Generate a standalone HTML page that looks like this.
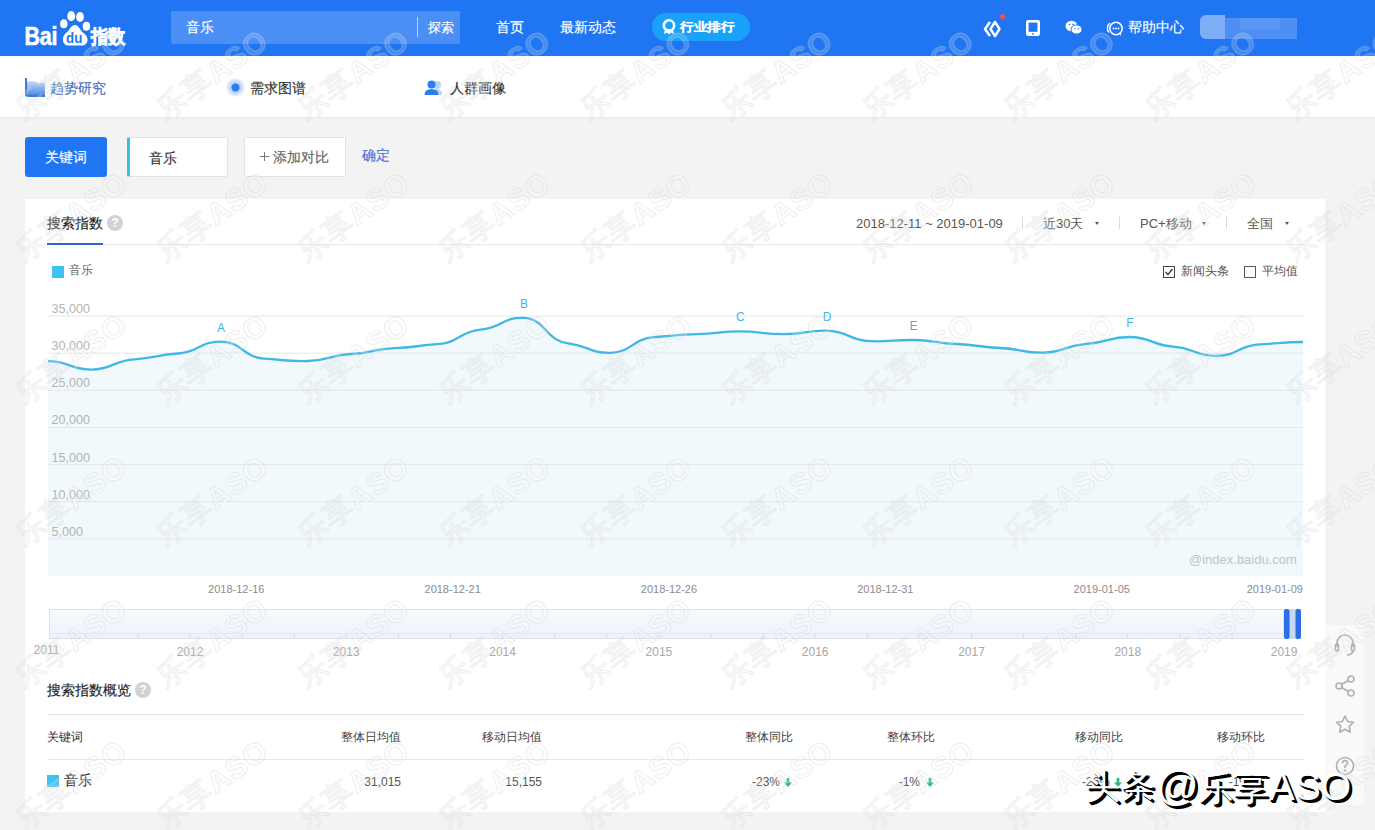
<!DOCTYPE html>
<html><head><meta charset="utf-8">
<style>
*{margin:0;padding:0;box-sizing:border-box}
html,body{width:1375px;height:830px;overflow:hidden}
body{position:relative;background:#f3f3f3;font-family:"Liberation Sans",sans-serif;color:#333;font-size:14px}
.t14{-webkit-text-stroke:0.15px currentColor}
.a{position:absolute;white-space:nowrap}
#hdr{position:absolute;left:0;top:0;width:1375px;height:56px;background:#1f75f2}
#nav2{position:absolute;left:0;top:56px;width:1375px;height:61px;background:#fff;box-shadow:0 1px 3px rgba(0,0,0,0.04)}
.t14{font-size:14px;line-height:14px}
.t12{font-size:12px;line-height:12px}
.t13{font-size:13px;line-height:13px}
#card{position:absolute;left:25px;top:199px;width:1300px;height:613px;background:#fff}
.yl{position:absolute;left:51.5px;font-size:12.6px;line-height:12px;color:#b4b4b4;width:60px}
.mk{position:absolute;width:20px;text-align:center;font-size:12px;line-height:14px;color:#3cb6e3}
.xl{position:absolute;top:583px;width:100px;text-align:right;font-size:11px;line-height:12px;color:#8c8c8c}
.yr{position:absolute;width:60px;text-align:center;font-size:12px;line-height:12px;color:#a8a8a8}
.th{position:absolute;top:731px;font-size:12px;line-height:12px;color:#444;text-align:right}
.td{position:absolute;top:776px;font-size:12px;line-height:12px;color:#555;text-align:right}
</style></head><body>
<div id="hdr"></div>
<!-- logo -->
<svg class="a" style="left:0;top:0" width="140" height="56" viewBox="0 0 140 56">
  <g fill="#fff">
    <text x="24.5" y="45" font-family="Liberation Sans" font-weight="bold" font-size="25" stroke="#fff" stroke-width="0.6" transform="translate(24.5 0) scale(0.86 1) translate(-24.5 0)" letter-spacing="-0.3">Bai</text>
    <ellipse cx="71.2" cy="16.2" rx="3.9" ry="5.1"/>
    <ellipse cx="80" cy="17" rx="3.9" ry="5.1"/>
    <ellipse cx="63.8" cy="23.8" rx="3.7" ry="4.5"/>
    <ellipse cx="86.4" cy="26.2" rx="3.7" ry="4.5"/>
    <path d="M75 25 C72 25 70.5 28 68.5 30.5 C66.5 33 63 34.5 63 39.5 C63 43.5 65.5 45.5 69 45.5 L81.5 45.5 C85 45.5 87.5 43.5 87.5 40 C87.5 35 83.5 33.5 81.5 31 C79.5 28.5 78 25 75 25 Z"/>
  </g>
  <text x="66" y="42.8" fill="#1f75f2" font-family="Liberation Sans" font-weight="bold" font-size="14.5" transform="translate(66 0) scale(0.92 1) translate(-66 0)">du</text>
</svg>
<div class="a" style="left:91px;top:24px;font-size:18px;line-height:24px;font-weight:900;color:#fff;transform:scale(0.95,1.05);transform-origin:0 0;letter-spacing:-0.5px;-webkit-text-stroke:0.7px #fff">指数</div>
<!-- search -->
<div class="a" style="left:171px;top:10.5px;width:289px;height:33px;background:#4b8ef4;border-radius:2px"></div>
<div class="a t14" style="left:186px;top:20px;color:#fff">音乐</div>
<div class="a" style="left:417px;top:17px;width:1px;height:20px;background:rgba(255,255,255,0.6)"></div>
<div class="a t14" style="left:427.5px;top:22px;color:#fff;font-size:12.5px;line-height:12.5px">探索</div>
<div class="a t14" style="left:496px;top:20px;color:#fff">首页</div>
<div class="a t14" style="left:560px;top:20px;color:#fff">最新动态</div>
<div class="a" style="left:652px;top:13px;width:98px;height:28px;border-radius:14px;background:#1aa1fa"></div>
<svg class="a" style="left:662px;top:19px" width="15" height="16" viewBox="0 0 15 16"><circle cx="7" cy="6.5" r="5.2" fill="none" stroke="#fff" stroke-width="2.6"/><path d="M3 10 L2 15 L5 13.5 L7 15.5 L9 13.5 L12 15 L11 10" fill="#fff"/></svg>
<div class="a t14" style="left:680px;top:20px;color:#fff;font-weight:bold;transform:scale(0.98,0.86);transform-origin:0 50%">行业排行</div>
<!-- right icons -->
<svg class="a" style="left:983px;top:20px" width="20" height="18" viewBox="0 0 20 18"><path d="M7 2 L2 9 L7 16" fill="none" stroke="#fff" stroke-width="2.6" stroke-linejoin="round"/><path d="M12 2 L7.5 9 L12 16 L16.5 9 Z" fill="none" stroke="#fff" stroke-width="2.4" stroke-linejoin="round"/></svg>
<div class="a" style="left:1000px;top:14px;width:5px;height:5px;border-radius:3px;background:#f4524d"></div>
<svg class="a" style="left:1026px;top:20px" width="14" height="16" viewBox="0 0 14 16"><rect x="0" y="0" width="14" height="16" rx="2.2" fill="#fff"/><rect x="2.6" y="2.6" width="8.8" height="9.2" fill="#1f75f2"/><circle cx="7" cy="13.9" r="0.9" fill="#1f75f2"/></svg>
<svg class="a" style="left:1065px;top:20px" width="18" height="15" viewBox="0 0 18 15"><ellipse cx="6.5" cy="6" rx="6" ry="5.2" fill="#fff"/><ellipse cx="11.5" cy="9.5" rx="5.5" ry="4.6" fill="#fff" stroke="#1f75f2" stroke-width="1"/><circle cx="4.5" cy="4.5" r="0.8" fill="#1f75f2"/><circle cx="8" cy="4.5" r="0.8" fill="#1f75f2"/><circle cx="10" cy="8.8" r="0.7" fill="#1f75f2"/><circle cx="13.2" cy="8.8" r="0.7" fill="#1f75f2"/></svg>
<svg class="a" style="left:1106px;top:20px" width="18" height="17" viewBox="0 0 18 17"><path d="M4 3 C1 5 0.5 10 3 12.5" fill="none" stroke="#fff" stroke-width="1.3"/><circle cx="10" cy="8.5" r="6.2" fill="none" stroke="#fff" stroke-width="1.5"/><path d="M13 14 L15.5 16 L14.5 12.5" fill="#fff"/><circle cx="7.5" cy="8.5" r="0.9" fill="#fff"/><circle cx="10" cy="8.5" r="0.9" fill="#fff"/><circle cx="12.5" cy="8.5" r="0.9" fill="#fff"/></svg>
<div class="a t14" style="left:1128px;top:20px;color:#fff">帮助中心</div>
<div class="a" style="left:1200px;top:15px;width:25px;height:24px;border-radius:6px 0 0 6px;background:#7eaef5"></div>
<div class="a" style="left:1225px;top:18px;width:72px;height:21px;background:#4f8ff4"></div>
<div class="a" style="left:1240px;top:18px;width:40px;height:12px;background:#5a97f5"></div>

<!-- nav2 -->
<div id="nav2"></div>
<svg class="a" style="left:25px;top:78px" width="20" height="19" viewBox="0 0 20 19"><defs><linearGradient id="g1" x1="0" y1="0" x2="0" y2="1"><stop offset="0" stop-color="#c9dcf6"/><stop offset="1" stop-color="#4f8be6"/></linearGradient></defs><path d="M0 0 L2 0 L2 16 Q2 17 3 17 L20 17 L20 19 L3 19 Q0 19 0 16 Z" fill="#3d78d8"/><path d="M2 4 Q7 2 11 4 Q15 6 20 4 L20 17 L3 17 Q2 17 2 16 Z" fill="url(#g1)"/></svg>
<div class="a t14" style="left:50px;top:81px;color:#3f6ec0">趋势研究</div>
<div class="a" style="left:225.5px;top:78px;width:19px;height:19px;border-radius:50%;background:radial-gradient(circle,#2f7cf2 0,#2f7cf2 3.6px,#b4cffb 4.4px,#c9dcfc 6px,#e3ecfe 8px,rgba(240,245,255,0.6) 9.5px)"></div>
<div class="a t14" style="left:250px;top:81px;color:#333">需求图谱</div>
<svg class="a" style="left:424px;top:80px" width="20" height="16" viewBox="0 0 20 16"><circle cx="13" cy="5" r="4" fill="#b8d3fa"/><path d="M9 15 Q9 9 13 9 Q18 9 18 15 Z" fill="#b8d3fa"/><circle cx="7.5" cy="4.5" r="4" fill="#2b7ef0"/><path d="M0.5 15 Q0.5 9 7.5 9 Q14.5 9 14.5 15 Z" fill="#2b7ef0"/></svg>
<div class="a t14" style="left:450px;top:81px;color:#333">人群画像</div>

<!-- keyword row -->
<div class="a" style="left:25px;top:137px;width:82px;height:40px;background:#1f75f2;border-radius:3px"></div>
<div class="a t14" style="left:45px;top:150px;color:#fff">关键词</div>
<div class="a" style="left:127px;top:137px;width:101px;height:40px;background:#fff;border:1px solid #e3e3e3;border-left:3px solid #3cbce8;border-radius:2px"></div>
<div class="a t14" style="left:149px;top:151px;color:#333">音乐</div>
<div class="a" style="left:244px;top:137px;width:102px;height:40px;background:#fff;border:1px solid #e3e3e3;border-radius:2px"></div>
<div class="a" style="left:260px;top:156px;width:9px;height:1px;background:#777"></div><div class="a" style="left:264px;top:152px;width:1px;height:9px;background:#777"></div><div class="a t14" style="left:273px;top:150px;color:#666">添加对比</div>
<div class="a t14" style="left:362px;top:148px;color:#4b73d6">确定</div>

<!-- card -->
<div id="card"></div>
<div class="a t14" style="left:47px;top:216px;color:#222">搜索指数</div>
<div class="a" style="left:107px;top:215px;width:16px;height:16px;border-radius:50%;background:#d2d2d2;color:#fff;font-size:12px;line-height:16px;text-align:center;font-weight:bold">?</div>
<div class="a" style="left:47px;top:244px;width:1257px;height:1px;background:#e8e8e8"></div>
<div class="a" style="left:47px;top:243px;width:56px;height:2px;background:#2f64c8"></div>
<div class="a t13" style="left:856px;top:217px;color:#555">2018-12-11 ~ 2019-01-09</div>
<div class="a" style="left:1022px;top:216px;width:1px;height:13px;background:#dcdcdc"></div>
<div class="a t13" style="left:1043px;top:217px;color:#555">近30天</div>
<div class="a" style="left:1094.5px;top:222px;width:0;height:0;border-left:2.5px solid transparent;border-right:2.5px solid transparent;border-top:3px solid #555"></div>
<div class="a" style="left:1119px;top:216px;width:1px;height:13px;background:#dcdcdc"></div>
<div class="a t13" style="left:1140px;top:217px;color:#555">PC+移动</div>
<div class="a" style="left:1201.5px;top:222px;width:0;height:0;border-left:2.5px solid transparent;border-right:2.5px solid transparent;border-top:3px solid #555"></div>
<div class="a" style="left:1226px;top:216px;width:1px;height:13px;background:#dcdcdc"></div>
<div class="a t13" style="left:1247px;top:217px;color:#555">全国</div>
<div class="a" style="left:1284.5px;top:222px;width:0;height:0;border-left:2.5px solid transparent;border-right:2.5px solid transparent;border-top:3px solid #555"></div>

<div class="a" style="left:52px;top:266px;width:12px;height:12px;background:#3ec1f3"></div>
<div class="a t12" style="left:69px;top:264px;color:#666">音乐</div>
<svg class="a" style="left:1163px;top:266px" width="12" height="12" viewBox="0 0 12 12"><rect x="0.5" y="0.5" width="11" height="11" fill="#fff" stroke="#444"/><path d="M2.5 6 L5 8.5 L9.5 3" fill="none" stroke="#333" stroke-width="1.3"/></svg>
<div class="a t12" style="left:1181px;top:265px;color:#555">新闻头条</div>
<svg class="a" style="left:1244px;top:266px" width="12" height="12" viewBox="0 0 12 12"><rect x="0.5" y="0.5" width="11" height="11" fill="#fff" stroke="#555"/></svg>
<div class="a t12" style="left:1262px;top:265px;color:#555">平均值</div>

<!-- chart -->
<svg class="a" style="left:0;top:0" width="1375" height="830">
  <rect x="48" y="316" width="1255" height="260" fill="#fff"/>
  <path d="M48.00 361.20 C69.64 361.20 69.64 369.74 91.28 369.60 C112.91 369.46 112.91 360.51 134.55 359.30 C156.19 358.09 156.19 354.83 177.83 353.50 C199.47 352.17 199.47 341.21 221.10 341.60 C242.74 341.99 242.74 357.25 264.38 358.70 C286.02 360.15 286.02 361.35 307.66 361.00 C329.29 360.65 329.29 354.96 350.93 354.00 C372.57 353.04 372.57 348.94 394.21 348.20 C415.84 347.46 415.84 345.59 437.48 344.20 C459.12 342.81 459.12 331.57 480.76 329.60 C502.40 327.63 502.40 316.89 524.03 317.90 C545.67 318.91 545.67 340.48 567.31 343.10 C588.95 345.72 588.95 353.24 610.59 352.80 C632.22 352.36 632.22 338.59 653.86 337.20 C675.50 335.81 675.50 334.63 697.14 334.20 C718.78 333.76 718.78 331.40 740.41 331.40 C762.05 331.40 762.05 334.25 783.69 334.20 C805.33 334.15 805.33 330.18 826.97 330.70 C848.60 331.22 848.60 340.50 870.24 341.20 C891.88 341.90 891.88 339.79 913.52 340.00 C935.16 340.21 935.16 343.40 956.79 344.00 C978.43 344.60 978.43 347.35 1000.07 348.00 C1021.71 348.65 1021.71 353.01 1043.34 352.70 C1064.98 352.39 1064.98 345.08 1086.62 343.90 C1108.26 342.72 1108.26 336.79 1129.90 337.00 C1151.53 337.21 1151.53 345.29 1173.17 346.70 C1194.81 348.11 1194.81 355.97 1216.45 355.80 C1238.09 355.63 1238.09 345.44 1259.72 344.40 C1281.36 343.36 1281.36 342.00 1303.00 342.00 L1303 576 L48 576 Z" fill="#f1f9fd"/>
  <line x1="48" y1="538.9" x2="1303" y2="538.9" stroke="#e6e6e6" stroke-width="1"/><line x1="48" y1="501.7" x2="1303" y2="501.7" stroke="#e6e6e6" stroke-width="1"/><line x1="48" y1="464.6" x2="1303" y2="464.6" stroke="#e6e6e6" stroke-width="1"/><line x1="48" y1="427.4" x2="1303" y2="427.4" stroke="#e6e6e6" stroke-width="1"/><line x1="48" y1="390.3" x2="1303" y2="390.3" stroke="#e6e6e6" stroke-width="1"/><line x1="48" y1="353.2" x2="1303" y2="353.2" stroke="#e6e6e6" stroke-width="1"/><line x1="48" y1="316.0" x2="1303" y2="316.0" stroke="#e6e6e6" stroke-width="1"/>
  <path d="M48.00 361.20 C69.64 361.20 69.64 369.74 91.28 369.60 C112.91 369.46 112.91 360.51 134.55 359.30 C156.19 358.09 156.19 354.83 177.83 353.50 C199.47 352.17 199.47 341.21 221.10 341.60 C242.74 341.99 242.74 357.25 264.38 358.70 C286.02 360.15 286.02 361.35 307.66 361.00 C329.29 360.65 329.29 354.96 350.93 354.00 C372.57 353.04 372.57 348.94 394.21 348.20 C415.84 347.46 415.84 345.59 437.48 344.20 C459.12 342.81 459.12 331.57 480.76 329.60 C502.40 327.63 502.40 316.89 524.03 317.90 C545.67 318.91 545.67 340.48 567.31 343.10 C588.95 345.72 588.95 353.24 610.59 352.80 C632.22 352.36 632.22 338.59 653.86 337.20 C675.50 335.81 675.50 334.63 697.14 334.20 C718.78 333.76 718.78 331.40 740.41 331.40 C762.05 331.40 762.05 334.25 783.69 334.20 C805.33 334.15 805.33 330.18 826.97 330.70 C848.60 331.22 848.60 340.50 870.24 341.20 C891.88 341.90 891.88 339.79 913.52 340.00 C935.16 340.21 935.16 343.40 956.79 344.00 C978.43 344.60 978.43 347.35 1000.07 348.00 C1021.71 348.65 1021.71 353.01 1043.34 352.70 C1064.98 352.39 1064.98 345.08 1086.62 343.90 C1108.26 342.72 1108.26 336.79 1129.90 337.00 C1151.53 337.21 1151.53 345.29 1173.17 346.70 C1194.81 348.11 1194.81 355.97 1216.45 355.80 C1238.09 355.63 1238.09 345.44 1259.72 344.40 C1281.36 343.36 1281.36 342.00 1303.00 342.00" fill="none" stroke="#3fb8e5" stroke-width="2.3"/>
  <defs><linearGradient id="sg" x1="0" y1="0" x2="0" y2="1"><stop offset="0" stop-color="#f6f9fe"/><stop offset="1" stop-color="#eef3f9"/></linearGradient></defs>
  <rect x="49.5" y="609.5" width="1234" height="29" fill="url(#sg)" stroke="#dbe2ec"/>
  <line x1="50" y1="633.5" x2="1283" y2="633.5" stroke="#e3e8ef"/>
  <line x1="85.8" y1="633" x2="85.8" y2="638" stroke="#d6dde8"/><line x1="137.9" y1="633" x2="137.9" y2="638" stroke="#d6dde8"/><line x1="190.0" y1="633" x2="190.0" y2="638" stroke="#d6dde8"/><line x1="242.1" y1="633" x2="242.1" y2="638" stroke="#d6dde8"/><line x1="294.2" y1="633" x2="294.2" y2="638" stroke="#d6dde8"/><line x1="346.3" y1="633" x2="346.3" y2="638" stroke="#d6dde8"/><line x1="398.4" y1="633" x2="398.4" y2="638" stroke="#d6dde8"/><line x1="450.5" y1="633" x2="450.5" y2="638" stroke="#d6dde8"/><line x1="502.6" y1="633" x2="502.6" y2="638" stroke="#d6dde8"/><line x1="554.7" y1="633" x2="554.7" y2="638" stroke="#d6dde8"/><line x1="606.8" y1="633" x2="606.8" y2="638" stroke="#d6dde8"/><line x1="658.9" y1="633" x2="658.9" y2="638" stroke="#d6dde8"/><line x1="711.0" y1="633" x2="711.0" y2="638" stroke="#d6dde8"/><line x1="763.1" y1="633" x2="763.1" y2="638" stroke="#d6dde8"/><line x1="815.2" y1="633" x2="815.2" y2="638" stroke="#d6dde8"/><line x1="867.3" y1="633" x2="867.3" y2="638" stroke="#d6dde8"/><line x1="919.4" y1="633" x2="919.4" y2="638" stroke="#d6dde8"/><line x1="971.5" y1="633" x2="971.5" y2="638" stroke="#d6dde8"/><line x1="1023.6" y1="633" x2="1023.6" y2="638" stroke="#d6dde8"/><line x1="1075.7" y1="633" x2="1075.7" y2="638" stroke="#d6dde8"/><line x1="1127.8" y1="633" x2="1127.8" y2="638" stroke="#d6dde8"/><line x1="1179.9" y1="633" x2="1179.9" y2="638" stroke="#d6dde8"/><line x1="1232.0" y1="633" x2="1232.0" y2="638" stroke="#d6dde8"/>
  <rect x="1289" y="609" width="7" height="30" fill="#c6d8f2"/>
  <rect x="1284" y="609" width="5.5" height="30" rx="2" fill="#2a6fe6"/>
  <rect x="1295.5" y="609" width="5.5" height="30" rx="2" fill="#2a6fe6"/>
</svg>
<div class="yl" style="top:525.9px">5,000</div><div class="yl" style="top:488.7px">10,000</div><div class="yl" style="top:451.6px">15,000</div><div class="yl" style="top:414.4px">20,000</div><div class="yl" style="top:377.3px">25,000</div><div class="yl" style="top:340.2px">30,000</div><div class="yl" style="top:303.0px">35,000</div>
<div class="mk" style="left:211.1px;top:320.6px">A</div><div class="mk" style="left:514.0px;top:296.9px">B</div><div class="mk" style="left:730.4px;top:310.4px">C</div><div class="mk" style="left:817.0px;top:309.7px">D</div><div class="mk" style="left:903.5px;top:319.0px">E</div><div class="mk" style="left:1119.9px;top:316.0px">F</div>
<div class="xl" style="left:164.4px">2018-12-16</div><div class="xl" style="left:380.8px">2018-12-21</div><div class="xl" style="left:597.1px">2018-12-26</div><div class="xl" style="left:813.5px">2018-12-31</div><div class="xl" style="left:1029.9px">2019-01-05</div><div class="xl" style="left:1203.0px">2019-01-09</div>
<div class="a" style="left:1189px;top:553px;font-size:13px;line-height:13px;color:#c3c3c3">@index.baidu.com</div>
<div class="yr" style="left:16.5px;top:644px">2011</div><div class="yr" style="left:160.0px;top:646px">2012</div><div class="yr" style="left:316.3px;top:646px">2013</div><div class="yr" style="left:472.6px;top:646px">2014</div><div class="yr" style="left:628.9px;top:646px">2015</div><div class="yr" style="left:785.2px;top:646px">2016</div><div class="yr" style="left:941.5px;top:646px">2017</div><div class="yr" style="left:1097.8px;top:646px">2018</div><div class="yr" style="left:1254.1px;top:646px">2019</div>

<!-- overview -->
<div class="a t14" style="left:47px;top:683px;color:#222">搜索指数概览</div>
<div class="a" style="left:135px;top:682px;width:16px;height:16px;border-radius:50%;background:#d2d2d2;color:#fff;font-size:12px;line-height:16px;text-align:center;font-weight:bold">?</div>
<div class="a" style="left:47px;top:714px;width:1257px;height:1px;background:#e3e3e3"></div>
<div class="a t12" style="left:47px;top:731px;color:#333">关键词</div>
<div class="th" style="left:301px;width:100px">整体日均值</div>
<div class="th" style="left:442px;width:100px">移动日均值</div>
<div class="th" style="left:693px;width:100px">整体同比</div>
<div class="th" style="left:835px;width:100px">整体环比</div>
<div class="th" style="left:1023px;width:100px">移动同比</div>
<div class="th" style="left:1165px;width:100px">移动环比</div>
<div class="a" style="left:47px;top:759px;width:1257px;height:1px;background:#e8e8e8"></div>
<div class="a" style="left:47px;top:775px;width:12px;height:12px;background:#3ec1f3"></div>
<div class="a t14" style="left:64px;top:773px;color:#333">音乐</div>
<div class="td" style="left:301px;width:100px">31,015</div>
<div class="td" style="left:442px;width:100px">15,155</div>
<div class="td" style="left:680px;width:100px">-23%</div>
<div class="td" style="left:820px;width:100px">-1%</div>
<div class="td" style="left:1010px;width:100px">-26%</div>
<div class="td" style="left:1150px;width:100px">-1%</div>
<svg class="a" style="left:784px;top:778px" width="8" height="9" viewBox="0 0 8 9"><path d="M4 9 L0 4.5 L2.6 4.5 L2.6 0 L5.4 0 L5.4 4.5 L8 4.5 Z" fill="#2db88c"/></svg>
<svg class="a" style="left:926px;top:778px" width="8" height="9" viewBox="0 0 8 9"><path d="M4 9 L0 4.5 L2.6 4.5 L2.6 0 L5.4 0 L5.4 4.5 L8 4.5 Z" fill="#2db88c"/></svg>
<svg class="a" style="left:1114px;top:778px" width="8" height="9" viewBox="0 0 8 9"><path d="M4 9 L0 4.5 L2.6 4.5 L2.6 0 L5.4 0 L5.4 4.5 L8 4.5 Z" fill="#2db88c"/></svg>
<svg class="a" style="left:1256px;top:778px" width="8" height="9" viewBox="0 0 8 9"><path d="M4 9 L0 4.5 L2.6 4.5 L2.6 0 L5.4 0 L5.4 4.5 L8 4.5 Z" fill="#2db88c"/></svg>

<!-- side bar -->
<div class="a" style="left:1325px;top:625px;width:39px;height:180px;background:#f9f9f9"></div>
<svg class="a" style="left:1333px;top:632px" width="24" height="150" viewBox="0 0 24 150" fill="none" stroke="#b0b0b0" stroke-width="1.6">
  <path d="M4 15 L4 11 A8 8 0 0 1 20 11 L20 15"/><rect x="2.5" y="12" width="3" height="7" rx="1.5"/><rect x="18.5" y="12" width="3" height="7" rx="1.5"/><path d="M20 19 Q19 23 14 23"/>
  <circle cx="18" cy="47" r="3"/><circle cx="6" cy="54" r="3"/><circle cx="18" cy="61" r="3"/><path d="M8.6 52.5 L15.4 48.5 M8.6 55.5 L15.4 59.5"/>
  <path d="M12 84 L14.6 89.5 L20.5 90.2 L16.2 94.3 L17.3 100.2 L12 97.3 L6.7 100.2 L7.8 94.3 L3.5 90.2 L9.4 89.5 Z" stroke-linejoin="round"/>
  <circle cx="12" cy="134" r="8.5"/><path d="M9.5 131.5 Q9.5 128.5 12 128.5 Q14.5 128.5 14.5 131 Q14.5 132.8 12 134 L12 136"/><circle cx="12" cy="138.5" r="0.5" fill="#b0b0b0"/>
</svg>

<!-- watermark -->
<svg class="a" style="left:0;top:0;pointer-events:none" width="1375" height="830">
  <defs><pattern id="wm" patternUnits="userSpaceOnUse" x="0.4" y="4" width="141.2" height="142">
    <g transform="translate(70.6 71) rotate(-36)">
      <text x="0" y="10" text-anchor="middle" font-size="30" letter-spacing="1" fill="rgba(255,255,255,0.16)" stroke="rgba(205,205,205,0.32)" stroke-width="1.2" style="font-family:'Liberation Sans',sans-serif"><tspan font-weight="normal">乐享</tspan><tspan font-weight="bold">ASO</tspan></text>
    </g>
  </pattern></defs>
  <rect x="0" y="0" width="1375" height="830" fill="url(#wm)"/>
</svg>
<!-- overlay watermark -->
<div class="a" style="left:1085px;top:766px;font-size:35px;line-height:40px;color:#fff;text-shadow:1.5px 1.5px 0 #000,3px 3px 0 #000">头条</div><div class="a" style="left:1156px;top:766px;font-size:35px;line-height:40px;color:#fff;text-shadow:1.5px 1.5px 0 #000,3px 3px 0 #000"><span style="font-size:42px;line-height:40px">@</span>乐享<span style="font-size:39px">ASO</span></div>
</body></html>
